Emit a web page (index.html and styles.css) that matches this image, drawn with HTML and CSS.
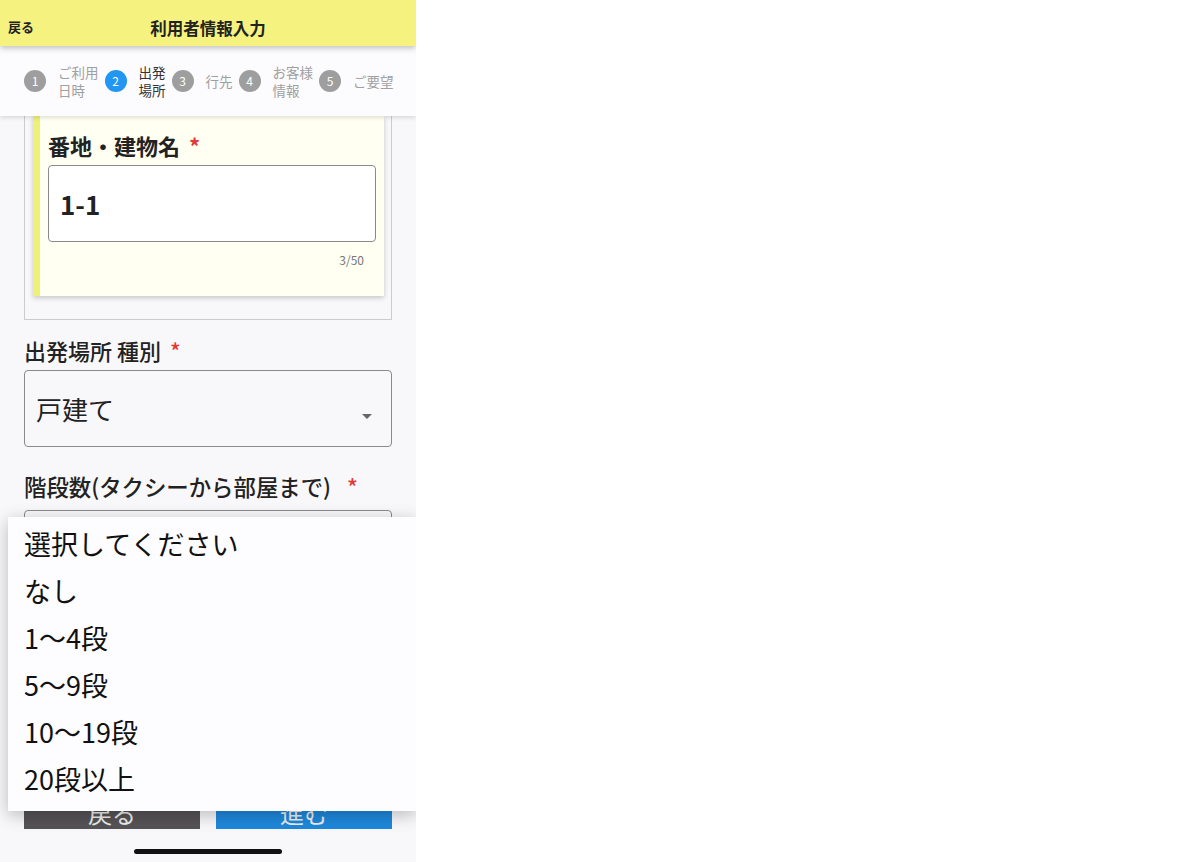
FILE: index.html
```html
<!DOCTYPE html>
<html lang="ja">
<head>
  <meta charset="UTF-8" />
  <meta name="viewport" content="width=device-width, initial-scale=1.0"/>
  <title>利用者情報入力</title>
  <link rel="stylesheet" href="styles.css">
</head>
<body>
  <div class="phone">
    <header class="appbar">
      <span class="appbar-back">戻る</span>
      <h1 class="appbar-title">利用者情報入力</h1>
    </header>

    <nav class="stepper">
      <div class="step"><span class="step-num">1</span><span class="step-label">ご利用<br>日時</span></div>
      <div class="step active"><span class="step-num">2</span><span class="step-label">出発<br>場所</span></div>
      <div class="step"><span class="step-num">3</span><span class="step-label">行先</span></div>
      <div class="step"><span class="step-num">4</span><span class="step-label">お客様<br>情報</span></div>
      <div class="step"><span class="step-num">5</span><span class="step-label">ご要望</span></div>
    </nav>

    <main class="content">
      <div class="address-box">
        <div class="address-card">
          <label class="field-label bold">番地・建物名<span class="req">*</span></label>
          <div class="text-input bold">1-1</div>
          <div class="counter">3/50</div>
        </div>
      </div>

      <label class="field-label first">出発場所 種別<span class="req">*</span></label>
      <div class="select-box">戸建て<span class="caret"></span></div>

      <label class="field-label second">階段数(タクシーから部屋まで)<span class="req wide">*</span></label>
      <div class="select-box stairs"></div>

      <div class="actions">
        <button class="btn btn-back">戻る</button>
        <button class="btn btn-next">進む</button>
      </div>
    </main>

    <!-- open select menu -->
    <ul class="menu">
      <li>選択してください</li>
      <li>なし</li>
      <li>1〜4段</li>
      <li>5〜9段</li>
      <li>10〜19段</li>
      <li>20段以上</li>
    </ul>

    <div class="home-bar"></div>
  </div>
</body>
</html>
```

FILE: styles.css
```css
:root {
  --bg: #f8f7fa;
  --yellow: #f5f27f;
  --text: #222222;
  --muted: #a0a0a0;
  --blue: #2196f3;
  --red: #e53935;
}

body {
  margin: 0;
  background: #ffffff;
  font-family: "Noto Sans CJK JP", "Noto Sans", sans-serif;
  color: var(--text);
}

.phone {
  position: relative;
  width: 416px;
  height: 862px;
  overflow: hidden;
  background: var(--bg);
}

.appbar {
  position: relative;
  z-index: 3;
  height: 46px;
  background: var(--yellow);
  display: flex;
  align-items: center;
  justify-content: center;
  padding-top: 10px;
  box-sizing: border-box;
  box-shadow: 0 2px 6px rgba(0, 0, 0, 0.25);
}

.appbar-back {
  position: absolute;
  left: 8px;
  top: 18px;
  font-size: 13px;
  font-weight: bold;
  line-height: 18px;
}

.appbar-title {
  margin: 0;
  font-size: 16.5px;
  font-weight: bold;
  line-height: 20px;
}

.stepper {
  position: relative;
  z-index: 2;
  height: 70px;
  background: #fcfbfd;
  display: flex;
  align-items: center;
  gap: 6px;
  padding-left: 24px;
  box-sizing: border-box;
  box-shadow: 0 2px 4px rgba(0, 0, 0, 0.12);
}

.step {
  display: flex;
  align-items: center;
  gap: 12px;
}

.step-num {
  width: 22px;
  height: 22px;
  border-radius: 50%;
  background: #9e9e9e;
  color: #ffffff;
  font-size: 12px;
  line-height: 22px;
  text-align: center;
}

.step-label {
  font-size: 13.5px;
  line-height: 18px;
  color: var(--muted);
}

.step.active .step-num {
  background: var(--blue);
}

.step.active .step-label {
  color: #333333;
}

.content {
  padding: 0 24px;
}

.address-box {
  border: 1px solid #cccccc;
  border-top: none;
  padding: 0 7px 23px 8px;
}

.address-card {
  background: #fffff2;
  border-left: 7px solid #eef07a;
  padding: 14px 8px 28px 8px;
  box-shadow: 0 2px 5px rgba(0, 0, 0, 0.2);
}

.field-label {
  display: block;
  font-size: 22px;
  font-weight: 500;
  line-height: 30px;
}

.field-label.bold {
  font-weight: bold;
}

.field-label.first {
  margin-top: 15px;
}

.field-label.second {
  margin-top: 24px;
  font-size: 22.4px;
}

.req {
  color: var(--red);
  margin-left: 9px;
}

.req.wide {
  margin-left: 16px;
}

.text-input {
  margin-top: 5px;
  height: 77px;
  box-sizing: border-box;
  border: 1px solid #8a8a8a;
  border-radius: 4px;
  background: #ffffff;
  padding-left: 11px;
  font-size: 26px;
  line-height: 75px;
}

.text-input.bold {
  font-weight: bold;
}

.counter {
  margin-top: 10px;
  padding-right: 12px;
  text-align: right;
  font-size: 12px;
  line-height: 16px;
  color: #777777;
}

.select-box {
  position: relative;
  margin-top: 5px;
  height: 77px;
  box-sizing: border-box;
  border: 1px solid #8a8a8a;
  border-radius: 4px;
  padding-left: 11px;
  font-size: 26px;
  line-height: 75px;
}

.select-box.stairs {
  margin-top: 9px;
}

.caret {
  position: absolute;
  right: 19px;
  top: 43px;
  border-left: 5px solid transparent;
  border-right: 5px solid transparent;
  border-top: 5px solid #666666;
}

.actions {
  margin-top: 206px;
  display: flex;
  gap: 16px;
}

.btn {
  flex: 1;
  height: 36px;
  border: none;
  color: #eeeeee;
  font-family: inherit;
  font-size: 24px;
  line-height: 40px;
  padding: 0;
}

.btn-back {
  background: #555355;
}

.btn-next {
  background: #1e88dc;
}

.menu {
  position: absolute;
  left: 8px;
  top: 517px;
  width: 408px;
  margin: 0;
  padding: 3px 0 9px;
  list-style: none;
  background: #fdfcfe;
  box-shadow: 0 4px 16px rgba(0, 0, 0, 0.25);
  z-index: 5;
}

.menu li {
  padding-left: 16px;
  font-size: 27px;
  line-height: 47px;
  color: #111111;
}

.home-bar {
  position: absolute;
  left: 134px;
  top: 849px;
  width: 148px;
  height: 5px;
  border-radius: 3px;
  background: #111111;
}
```
